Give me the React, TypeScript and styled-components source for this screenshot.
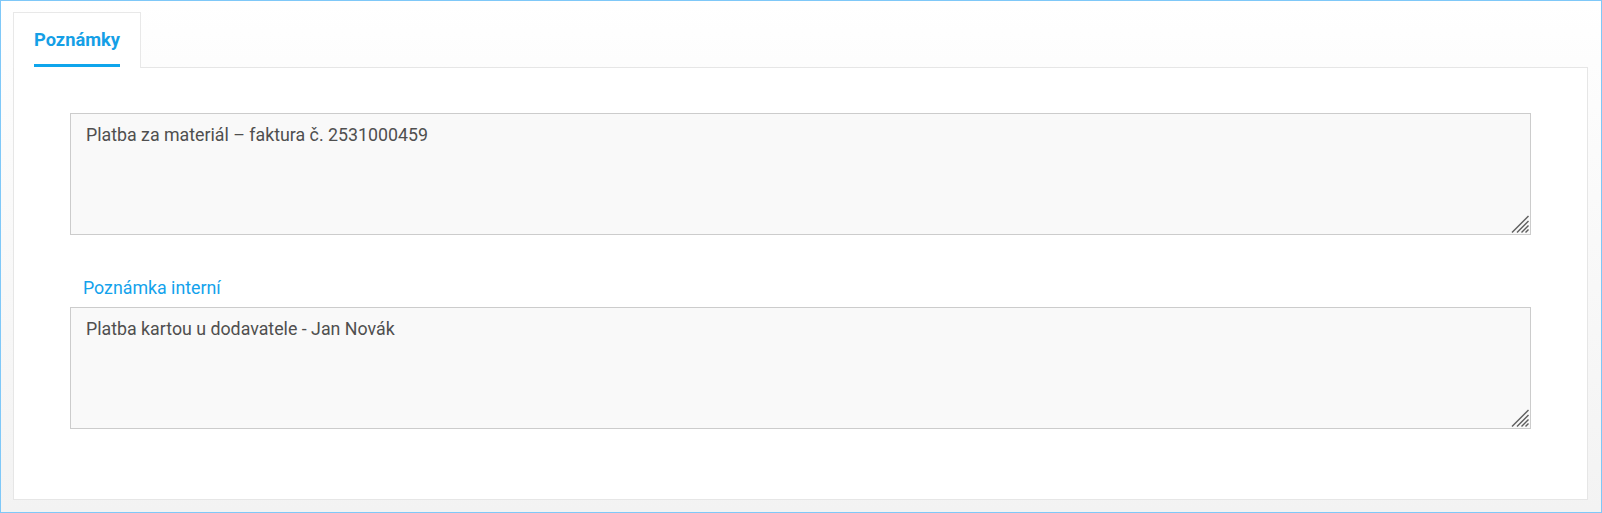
import React from "react";
import styled, { createGlobalStyle } from "styled-components";

const Global = createGlobalStyle`
  html, body { margin: 0; padding: 0; }
  body { font-family: Roboto, "Liberation Sans", Arial, sans-serif; }
  * { box-sizing: border-box; }
`;

const Frame = styled.div`
  width: 1602px;
  height: 513px;
  border: 1px solid #7fc8f8;
  background: linear-gradient(to bottom, #ffffff 0px, #fdfdfd 60px, #f3f3f3 100%);
  padding: 11px 13px 12px 12px;
  display: flex;
  flex-direction: column;
`;

const TabBar = styled.div`
  display: flex;
  position: relative;
  z-index: 1;
  margin-bottom: -1px;
`;

const Tab = styled.div`
  width: 128px;
  height: 56px;
  background: #ffffff;
  border: 1px solid #e8e8e8;
  border-bottom: none;
  padding: 0 19px 0 20px;
  display: flex;
  flex-direction: column;
  justify-content: flex-end;
`;

const TabLabel = styled.span`
  font-size: 18.3px;
  font-weight: 700;
  color: #159fe6;
  line-height: 22px;
  padding-bottom: 13px;
  border-bottom: 3px solid #0ea5ec;
  margin-bottom: 1px;
  white-space: nowrap;
  align-self: flex-start;
`;

const Panel = styled.div`
  flex: 1;
  background: #ffffff;
  border: 1px solid #e6e6e6;
  padding: 45px 56px 0 56px;
  display: flex;
  flex-direction: column;
`;

const AreaWrap = styled.div`
  position: relative;
  width: 100%;
  height: 122px;
`;

const NoteArea = styled.textarea`
  display: block;
  width: 100%;
  height: 100%;
  background: #f9f9f9;
  border: 1px solid #cccccc;
  border-radius: 0;
  padding: 10px 15px;
  font-family: Roboto, "Liberation Sans", Arial, sans-serif;
  font-size: 17.8px;
  line-height: 22px;
  color: #4f4f4f;
  outline: none;
  resize: none;
  margin: 0;
`;

const Grip = styled.svg`
  position: absolute;
  right: 2px;
  bottom: 2px;
  width: 18px;
  height: 18px;
  pointer-events: none;
`;

const Field = styled.div`
  display: flex;
  flex-direction: column;
  margin-top: 42px;
`;

const FieldLabel = styled.label`
  font-size: 17.8px;
  line-height: 22px;
  color: #13a2ec;
  padding-left: 13px;
  margin-bottom: 8px;
`;

function ResizeGrip() {
  return (
    <Grip viewBox="0 0 18 18">
      <g stroke="#5e5e5e" strokeWidth="1.4" fill="none" strokeLinecap="square">
        <line x1="1.5" y1="17" x2="17" y2="1.5" />
        <line x1="6.5" y1="17" x2="17" y2="6.5" />
        <line x1="11" y1="17" x2="17" y2="11" />
        <line x1="15" y1="17" x2="17" y2="15" />
      </g>
    </Grip>
  );
}

function Note({ value }: { value: string }) {
  return (
    <AreaWrap>
      <NoteArea readOnly defaultValue={value} />
      <ResizeGrip />
    </AreaWrap>
  );
}

export default function App() {
  return (
    <>
      <Global />
      <Frame>
        <TabBar>
          <Tab>
            <TabLabel>Poznámky</TabLabel>
          </Tab>
        </TabBar>
        <Panel>
          <Note value="Platba za materiál – faktura č. 2531000459" />
          <Field>
            <FieldLabel>Poznámka interní</FieldLabel>
            <Note value="Platba kartou u dodavatele - Jan Novák" />
          </Field>
        </Panel>
      </Frame>
    </>
  );
}
